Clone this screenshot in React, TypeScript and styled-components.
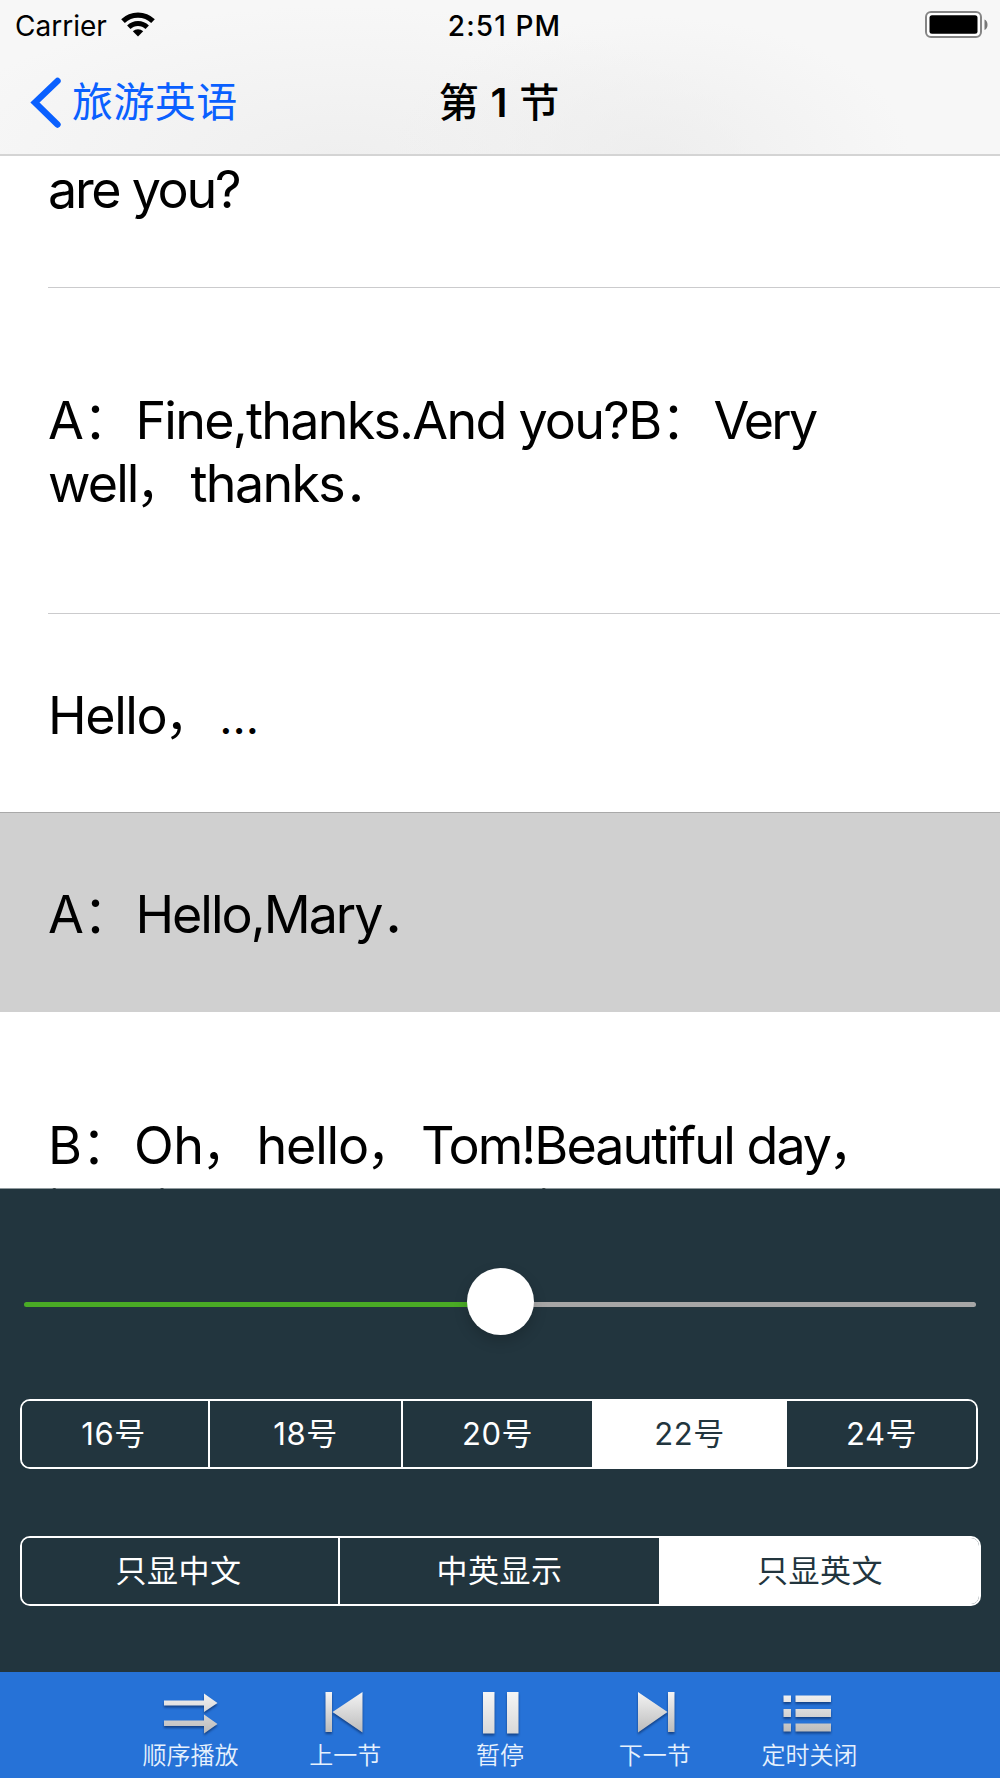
import React from "react";
import styled, { createGlobalStyle } from "styled-components";

const latin = `Inter, "Noto Sans CJK SC", sans-serif`;
const cjk = `"Noto Sans CJK SC", sans-serif`;
const navy = "#22353e";

const GlobalStyle = createGlobalStyle`
  *, *::before, *::after { box-sizing: border-box; }
  body { margin: 0; background: #fff; }
  button { font: inherit; color: inherit; background: none; border: 0; padding: 0; }
`;

const Screen = styled.div`
  width: 1000px;
  height: 1778px;
  display: flex;
  flex-direction: column;
  overflow: hidden;
  background: #fff;
  color: #000;
  font-family: ${latin};
`;

const Header = styled.header`
  flex: none;
  height: 156px;
  border-bottom: 2px solid #d4d4d4;
  background:
    radial-gradient(ellipse 260px 140px at 650px 156px, rgba(236, 236, 236, 0.8), rgba(247, 247, 247, 0) 100%),
    radial-gradient(ellipse 420px 150px at 340px 156px, rgba(237, 237, 237, 0.8), rgba(247, 247, 247, 0) 100%),
    #f7f7f7;
`;

const StatusBar = styled.div`
  display: grid;
  grid-template-columns: 1fr auto 1fr;
  align-items: center;
  height: 51px;
  padding: 0 12px 0 15px;
  font-size: 28px;
  line-height: 34px;
`;

const Carrier = styled.div`
  display: flex;
  align-items: center;
  gap: 14px;

  svg { margin-top: -3px; }
`;

const Clock = styled.div`
  font-weight: 550;
  letter-spacing: 1.1px;
  padding-left: 6px;
`;

const BatteryIcon = styled.svg`
  justify-self: end;
  margin-top: -2px;
`;

const NavBar = styled.nav`
  display: grid;
  grid-template-columns: 1fr auto 1fr;
  align-items: center;
  height: 103px;
  padding: 0 30px;
`;

const BackButton = styled.button`
  display: flex;
  align-items: center;
  gap: 10px;
  color: #0a60ff;
`;

const BackLabel = styled.span`
  padding-bottom: 8px;
  font-family: ${cjk};
  font-size: 41px;
  line-height: 60px;
  letter-spacing: 0.4px;
`;

const Title = styled.h1`
  margin: 0;
  padding-right: 2px;
  font-size: 40px;
  font-weight: 500;
  line-height: 60px;
  word-spacing: 1.6px;
`;

const TitleNumber = styled.span`
  font-weight: 600;
`;

const Lines = styled.main`
  flex: none;
  height: 1033px;
  overflow: hidden;
`;

const Row = styled.section<{ $height: number; $top: number; $active?: boolean }>`
  height: ${(p) => p.$height}px;
  padding: ${(p) => p.$top}px 0 0 48px;
  font-size: 52px;
  line-height: 63px;
  white-space: nowrap;
  background: ${(p) => (p.$active ? "#d0d0d0" : "#fff")};
  border-top: ${(p) => (p.$active ? "1px solid #a9a9a9" : "0")};
  display: flex;
  flex-direction: column;
`;

const Divider = styled.hr`
  width: 952px;
  height: 1px;
  margin: auto 0 0;
  border: 0;
  background: #cbcbcd;
`;

const Line = styled.div`
  height: 63px;
`;

const Run = styled.span<{ $track: number }>`
  letter-spacing: ${(p) => p.$track}px;
`;

const Wide = styled.span<{ $indent: number }>`
  display: inline-block;
  width: 53px;
  text-indent: ${(p) => p.$indent}px;
  font-weight: 350;
`;

const Ellipsis = styled.span`
  font-size: 46px;
  line-height: 0;
`;

const Panel = styled.section`
  flex: none;
  height: 484px;
  margin-top: -1px;
  position: relative;
  padding: 113px 0 0 20px;
  background: ${navy};
  background-clip: padding-box;
  border-top: 1px solid rgba(34, 53, 62, 0.5);
`;

const Slider = styled.div`
  position: relative;
  width: 952px;
  height: 5px;
  margin-left: 4px;
  border-radius: 3px;
  background: linear-gradient(to right, #4aab25 50%, #a6a6a6 50%);
`;

const Thumb = styled.div`
  position: absolute;
  left: 443px;
  top: -34px;
  width: 67px;
  height: 67px;
  border-radius: 50%;
  background: #fff;
  box-shadow: 0 6px 14px rgba(0, 0, 0, 0.18);
`;

const Segments = styled.div<{ $columns: string; $width: number; $top: number }>`
  display: grid;
  grid-template-columns: ${(p) => p.$columns};
  width: ${(p) => p.$width}px;
  height: 70px;
  margin-top: ${(p) => p.$top}px;
  border: 2px solid #fff;
  border-radius: 10px;
  overflow: hidden;
`;

const Segment = styled.button<{ $on?: boolean }>`
  display: flex;
  justify-content: center;
  align-items: center;
  padding-bottom: 5px;
  border-left: 2px solid #fff;
  background: ${(p) => (p.$on ? "#fff" : navy)};
  color: ${(p) => (p.$on ? navy : "#fff")};
  font-size: 31px;
  letter-spacing: 0.5px;

  &:first-child {
    border-left: 0;
    padding-right: 3px;
  }
`;

const Toolbar = styled.footer`
  flex: none;
  display: grid;
  grid-template-columns: repeat(5, 154.8px);
  justify-content: center;
  height: 106px;
  background: #2672d7;
`;

const Tool = styled.button`
  display: flex;
  flex-direction: column;
  align-items: center;
  padding-top: 14px;
  color: #e6f1fd;
  font-family: ${cjk};
  font-size: 24px;
  font-weight: 350;
  line-height: 34px;

  svg {
    display: block;
    margin-bottom: 1px;
    filter: drop-shadow(0 2px 1px rgba(0, 20, 60, 0.5));
  }
`;

type Part = [string, number] | string;

const LyricLine = ({ parts }: { parts: Part[] }) => (
  <Line>
    {parts.map((p, i) => {
      if (p === "…") return <Ellipsis key={i}>{p}</Ellipsis>;
      if (typeof p === "string") return <Wide key={i} $indent={p === "，" ? -2 : 0}>{p}</Wide>;
      return <Run key={i} $track={p[1]}>{p[0]}</Run>;
    })}
  </Line>
);

const rows: { height: number; top: number; active?: boolean; divider?: boolean; lines: Part[][] }[] = [
  { height: 132, top: 2, divider: true, lines: [[["are you?", -2.3]]] },
  {
    height: 326, top: 101, divider: true,
    lines: [
      [["A", -1.5], "：", ["Fine,thanks.And you?B", -1.75], "：", ["Very", -2.8]],
      [["well", -1.9], "，", ["thanks", -1.7], "．"],
    ],
  },
  { height: 198, top: 70, lines: [[["Hello", -1.4], "，", "…"]] },
  { height: 200, top: 70, active: true, lines: [[["A", -1.5], "：", ["Hello,Mary", -2], "．"]] },
  {
    height: 326, top: 102,
    lines: [
      [["B", -1], "：", ["Oh", -0.5], "，", ["hello", -1.2], "，", ["Tom!Beautiful day", -1.95], "，"],
      [["isn't it?A", -1.7], "：", ["How are things", -2]],
    ],
  },
];

const Metal = () => (
  <defs>
    <linearGradient id="metal" gradientUnits="userSpaceOnUse" x1="0" y1="4" x2="0" y2="48">
      <stop offset="0" stopColor="#f7f7f7" />
      <stop offset="1" stopColor="#b9b9b9" />
    </linearGradient>
    <linearGradient id="metalSoft" gradientUnits="userSpaceOnUse" x1="0" y1="4" x2="0" y2="48">
      <stop offset="0" stopColor="#f7f7f7" />
      <stop offset="1" stopColor="#d8d8d8" />
    </linearGradient>
  </defs>
);

const tools: { label: string; icon: React.ReactNode }[] = [
  {
    label: "顺序播放",
    icon: <path fill="url(#metal)" d="M4 14.5h40V7.5L57.500 17 44 26v-6.500H4zM4 34.500h40V28.500L57.500 38 44 47.500V40H4z" />,
  },
  { label: "上一节", icon: <path fill="url(#metal)" d="M10.500 6H17v40h-6.500zM17.500 26 47.500 6v40.500z" /> },
  { label: "暂停", icon: <path fill="url(#metalSoft)" d="M13 6h11.500v41.500H13zM37 6h11.500v41.500H37z" /> },
  { label: "下一节", icon: <path fill="url(#metal)" d="M49.500 6H43v40h6.500zM42.500 26 13 6v40.500z" /> },
  {
    label: "定时关闭",
    icon: (
      <path
        fill="url(#metal)"
        d="M3.500 9.500H11V16H3.500zM15.500 9.500H51V16H15.500zM3.500 23H11v8H3.500zM15.500 23H51v8H15.500zM3.500 37.500H11v8H3.500zM15.500 37.500H51v8H15.500z"
      />
    ),
  },
];

export default function App() {
  return (
    <Screen>
      <GlobalStyle />
      <Header>
        <StatusBar>
          <Carrier>
            Carrier
            <svg width="34" height="25" viewBox="0 0 34 25">
              <path d="M17 24.500 11.800 19.300A7.400 7.400 0 0 1 22.200 19.300Z" />
              <path d="M7.800 15.300A13 13 0 0 1 26.200 15.300" fill="none" stroke="#000" strokeWidth="4.800" />
              <path d="M2 9.200A21.500 21.500 0 0 1 32 9.200" fill="none" stroke="#000" strokeWidth="5.200" />
            </svg>
          </Carrier>
          <Clock>2:51 PM</Clock>
          <BatteryIcon width="63" height="28" viewBox="0 0 63 28">
            <rect x="1" y="1" width="55" height="25" rx="5" fill="#fff" stroke="#858585" strokeWidth="2" />
            <rect x="4.500" y="4.300" width="48" height="18.400" rx="2.500" />
            <path d="M59.500 8.500c4 1.500 4 9 0 10.500z" fill="#777" />
          </BatteryIcon>
        </StatusBar>
        <NavBar>
          <BackButton>
            <svg width="32" height="52" viewBox="0 0 32 52">
              <path d="M27.500 4 5 25.500l22.500 22" fill="none" stroke="#0a60ff" strokeWidth="6.400" strokeLinecap="round" />
            </svg>
            <BackLabel>旅游英语</BackLabel>
          </BackButton>
          <Title>第<TitleNumber> 1 </TitleNumber>节</Title>
        </NavBar>
      </Header>

      <Lines>
        {rows.map((r, i) => (
          <Row key={i} $height={r.height} $top={r.top} $active={r.active}>
            {r.lines.map((parts, j) => <LyricLine key={j} parts={parts} />)}
            {r.divider && <Divider />}
          </Row>
        ))}
      </Lines>

      <Panel>
        <Slider><Thumb /></Slider>
        <Segments $columns="186px 193px 191px 193px 1fr" $width={958} $top={92}>
          {["16号", "18号", "20号", "22号", "24号"].map((t) => (
            <Segment key={t} $on={t === "22号"}>{t}</Segment>
          ))}
        </Segments>
        <Segments $columns="316px 321px 1fr" $width={961} $top={67}>
          {["只显中文", "中英显示", "只显英文"].map((t) => (
            <Segment key={t} $on={t === "只显英文"}>{t}</Segment>
          ))}
        </Segments>
      </Panel>

      <Toolbar>
        {tools.map((t) => (
          <Tool key={t.label}>
            <svg width="60" height="50" viewBox="0 0 60 50">
              <Metal />
              {t.icon}
            </svg>
            {t.label}
          </Tool>
        ))}
      </Toolbar>
    </Screen>
  );
}
